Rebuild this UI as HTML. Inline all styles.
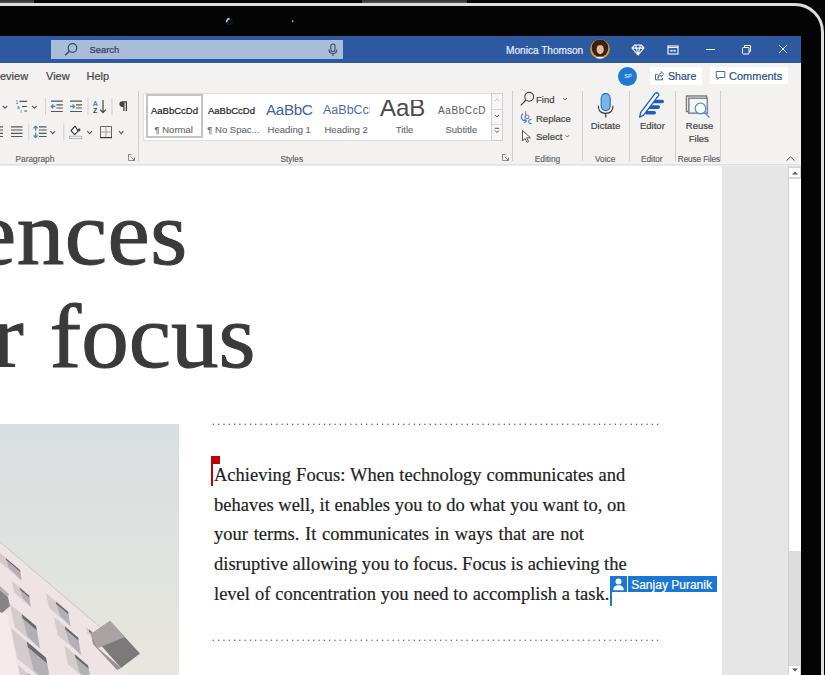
<!DOCTYPE html>
<html><head><meta charset="utf-8">
<style>
*{margin:0;padding:0;box-sizing:border-box}
html,body{width:825px;height:675px;overflow:hidden;background:#040404;font-family:"Liberation Sans",sans-serif}
.a{position:absolute}
.t{position:absolute;white-space:nowrap;line-height:1;-webkit-text-stroke:0.2px currentColor}
#frame{position:absolute;left:-40px;top:3px;width:864.3px;height:760px;border:3px solid #dedede;border-radius:29px}
#title{left:0;top:36px;width:801px;height:27px;background:#2c59a0}
#search{left:51px;top:40px;width:292px;height:19px;background:#a9bcd8}
#ribbon{left:0;top:63px;width:801px;height:101px;background:#f3f2f1}
#doc{left:0;top:164px;width:801px;height:511px;background:#e6e6e6}
#page{left:0;top:164px;width:722px;height:511px;background:#fff}
.sep{position:absolute;width:1px;background:#c8c6c4}
.gl{position:absolute;-webkit-text-stroke:0.15px currentColor;margin-top:1px;font-size:8.3px;color:#616161;white-space:nowrap;line-height:1}
.rb{position:absolute;-webkit-text-stroke:0.2px currentColor;font-size:9.5px;color:#444;white-space:nowrap;line-height:1}
</style></head><body>
<!-- top bezel bits -->
<div class="a" style="left:0;top:0;width:34px;height:3px;background:linear-gradient(#333,#555)"></div>
<div class="a" style="left:362px;top:0;width:105px;height:3px;background:linear-gradient(#333,#555)"></div>
<div id="frame"></div>
<svg class="a" style="left:222px;top:15px" width="80" height="14" viewBox="222 15 80 14"><circle cx="229.3" cy="21.6" r="3.6" fill="#0d1420"/><path d="M226.6 22.3 Q226.6 19 229.6 18.5" fill="none" stroke="#c5d0e0" stroke-width="1.3"/><circle cx="293" cy="21.5" r="1.6" fill="#1a2230"/><circle cx="292.6" cy="21.1" r="0.8" fill="#b9c2d0"/></svg>

<!-- title bar -->
<div id="title" class="a"></div>
<div id="search" class="a"></div>
<svg class="a" style="left:63px;top:42px" width="16" height="16" viewBox="0 0 16 16"><circle cx="9.5" cy="6" r="4.3" fill="none" stroke="#33466a" stroke-width="1.2"/><path d="M6.5 9 L2.2 13.3" stroke="#33466a" stroke-width="1.3"/></svg>
<div class="t" style="left:89.6px;top:45.9px;font-size:9.3px;color:#2b3a58">Search</div>
<svg class="a" style="left:327px;top:43px" width="12" height="14" viewBox="0 0 12 14"><rect x="3.8" y="1" width="4.2" height="7.5" rx="2.1" fill="none" stroke="#3a4b6a" stroke-width="1.1"/><path d="M2 6.5 Q2 10.5 5.9 10.5 Q9.8 10.5 9.8 6.5 M5.9 10.5 V13" fill="none" stroke="#3a4b6a" stroke-width="1.1"/></svg>

<div class="t" style="left:506px;top:45.5px;font-size:10.1px;color:#e8eefa">Monica Thomson</div>
<svg class="a" style="left:589.5px;top:39.3px" width="20" height="20" viewBox="0 0 20 20"><defs><clipPath id="av"><circle cx="10" cy="10" r="9.8"/></clipPath></defs><g clip-path="url(#av)"><rect width="20" height="20" fill="#c9a048"/><ellipse cx="10" cy="9" rx="8.3" ry="8.8" fill="#3b2112"/><ellipse cx="10.2" cy="10.6" rx="3.6" ry="4.6" fill="#e7b99a"/><path d="M4 20 Q10 15.5 16 20 Z" fill="#f2f2f2"/></g></svg>

<svg class="a" style="left:630.5px;top:43.5px" width="14" height="12" viewBox="0 0 14 12"><path d="M1 4 L3.8 1 H10.2 L13 4 L7 11.2 Z M1.2 4.1 H12.8 M5.2 1.2 Q4.6 3 5.3 4.1 L7 11 L8.7 4.1 Q9.4 3 8.8 1.2" fill="none" stroke="#fff" stroke-width="1.1" stroke-linejoin="round"/></svg>
<svg class="a" style="left:667px;top:44.5px" width="12" height="10" viewBox="0 0 12 10"><rect x="1" y="1" width="10" height="8" fill="none" stroke="#fff" stroke-width="1.1"/><path d="M1 2.6 H11" stroke="#fff" stroke-width="1"/><path d="M2.8 5.8 L4.6 4.4 V7.2 Z M9.2 5.8 L7.4 4.4 V7.2 Z" fill="#fff"/><path d="M4.5 5.8 H7.5" stroke="#fff" stroke-width="0.9"/></svg>
<div class="a" style="left:706px;top:49px;width:9px;height:1px;background:#fff"></div>
<svg class="a" style="left:741px;top:44px" width="11" height="11" viewBox="0 0 11 11"><rect x="1.5" y="3.5" width="6.5" height="6.5" rx="0.8" fill="none" stroke="#fff" stroke-width="1"/><path d="M3.5 3.5 V1.5 H9.5 V7.5 H8" fill="none" stroke="#fff" stroke-width="1"/></svg>
<svg class="a" style="left:778px;top:44px" width="10" height="10" viewBox="0 0 10 10"><path d="M1 1 L9 9 M9 1 L1 9" stroke="#fff" stroke-width="0.9"/></svg>

<!-- ribbon -->
<div id="ribbon" class="a"></div>
<div class="t" style="left:0;top:71px;font-size:11px;color:#444">eview</div>
<div class="t" style="left:46px;top:71px;font-size:11px;color:#444">View</div>
<div class="t" style="left:86.5px;top:71px;font-size:11px;color:#444">Help</div>


<!-- share / comments -->
<div class="a" style="left:618px;top:66.8px;width:19px;height:19px;border-radius:50%;background:#1f78d1"></div>
<div class="t" style="left:624.3px;top:74px;font-size:5.6px;color:#f4f8ff;-webkit-text-stroke:0">SP</div>
<div class="a" style="left:650px;top:67px;width:52px;height:17.5px;background:#fff;border-radius:1px"></div>
<svg class="a" style="left:654px;top:70px" width="11" height="11" viewBox="0 0 11 11"><path d="M3.5 4.5 H1.5 V9.8 H8.5 V8" fill="none" stroke="#3b5588" stroke-width="0.9"/><path d="M4 8.5 Q4.2 5.5 7.3 5.3 V6.8 L9.8 4.2 L7.3 1.6 V3.2 Q3.8 3.6 4 8.5Z" fill="none" stroke="#3b5588" stroke-width="0.85" stroke-linejoin="round"/></svg>
<div class="t" style="left:668px;top:70.8px;font-size:10.6px;color:#2b4c86">Share</div>
<div class="a" style="left:710px;top:66.5px;width:78px;height:17.5px;background:#fff;border-radius:1px"></div>
<svg class="a" style="left:715px;top:70px" width="11" height="11" viewBox="0 0 11 11"><path d="M1.3 1.5 H9.8 V7.5 H4.2 L2.3 9.3 V7.5 H1.3 Z" fill="none" stroke="#3b5588" stroke-width="0.9" stroke-linejoin="round"/></svg>
<div class="t" style="left:729px;top:70.5px;font-size:11px;color:#2b4c86">Comments</div>

<!-- Paragraph group -->
<svg class="a" style="left:0;top:90px" width="140" height="52" viewBox="0 90 140 52">
 <g fill="none" stroke="#555" stroke-width="1.1">
  <path d="M2.7 105.8 L5 108.2 L7.3 105.8"/>
  <path d="M32 105.8 L34.4 108.2 L36.8 105.8"/>
  <path d="M50.5 131.2 L52.8 133.6 L55.1 131.2"/>
  <path d="M87.3 131.2 L89.6 133.6 L92 131.2"/>
  <path d="M119 131.2 L121.2 133.6 L123.4 131.2"/>
 </g>
 <!-- multilevel list -->
 <g stroke="#555" stroke-width="1.2"><path d="M19.5 101.3 H27.2 M22 106.5 H27.2 M24.3 111 H27.2"/></g>
 <g fill="#2e6ea8" font-family="Liberation Sans" font-size="5"><text x="15.5" y="103.5">1</text><text x="17" y="108.5">a</text><text x="20.5" y="113">i</text></g>
 <!-- separators -->
 <g fill="#d2d0ce"><rect x="45" y="98" width="1" height="17"/><rect x="87.5" y="98" width="1" height="17"/><rect x="111.5" y="98" width="1" height="17"/>
 <rect x="28.3" y="123.5" width="1" height="17"/><rect x="63.3" y="123.5" width="1" height="17"/></g>
 <!-- decrease indent -->
 <g stroke="#555" stroke-width="1.2"><path d="M51 101.2 H62.8 M56.5 104.8 H62.8 M56.5 108 H62.8 M51 111.5 H62.8"/></g>
 <path d="M51.3 106.4 H55.5 M53.3 104.4 L51.3 106.4 L53.3 108.4" fill="none" stroke="#2f86d0" stroke-width="1.2"/>
 <!-- increase indent -->
 <g stroke="#555" stroke-width="1.2"><path d="M70 101.2 H82 M76 104.8 H82 M76 108 H82 M70 111.5 H82"/></g>
 <path d="M70.2 106.4 H74.5 M72.6 104.4 L74.6 106.4 L72.6 108.4" fill="none" stroke="#2f86d0" stroke-width="1.2"/>
 <!-- sort -->
 <text x="92.8" y="105.5" font-family="Liberation Sans" font-size="7" font-weight="bold" fill="#2f86d0">A</text>
 <text x="93" y="113.2" font-family="Liberation Sans" font-size="7" font-weight="bold" fill="#444">Z</text>
 <path d="M103 100 V112.5 M100.2 109.6 L103 112.6 L105.8 109.6" fill="none" stroke="#444" stroke-width="1.2"/>
 <!-- pilcrow -->
 <path d="M127 101.3 H122.2 A2.7 2.7 0 0 0 122.2 106.9 H123.2 V111.1 H124.5 V102.5 H125.7 V111.1 H127 Z" fill="#444"/>
 <!-- justify partial -->
 <g stroke="#555" stroke-width="1.2"><path d="M0 126.8 H3 M0 130 H3 M0 133.3 H3 M0 136.5 H3 M11 126.8 H22.5 M11 130 H22.5 M11 133.3 H22.5 M11 136.5 H22.5"/></g>
 <!-- line spacing -->
 <g stroke="#555" stroke-width="1.2"><path d="M39 126.8 H46.6 M39 130 H46.6 M39 133.3 H46.6 M39 136.5 H46.6"/></g>
 <path d="M35.6 126.2 V130.8 M33.5 128.3 L35.6 126.2 L37.7 128.3 M35.6 132.8 V137.4 M33.5 135.3 L35.6 137.4 L37.7 135.3" fill="none" stroke="#2f86d0" stroke-width="1.2"/>
 <!-- shading -->
 <path d="M74 127.3 L71 130.7 L74.6 134.6 L78.1 131.2 L75.2 126.2 L73.5 127.8" fill="#fff" stroke="#333" stroke-width="1.1" stroke-linejoin="round"/>
 <circle cx="79.1" cy="130" r="1.4" fill="#1e4f8a"/>
 <rect x="69.4" y="136.2" width="12.4" height="2.1" fill="#fafafa" stroke="#9a9a9a" stroke-width="0.7"/>
 <!-- borders -->
 <path d="M100.5 126.5 H111.5 V137.5 H100.5 Z" fill="none" stroke="#555" stroke-width="0.9"/><path d="M106 126.5 V137.5 M100.5 132 H111.5" fill="none" stroke="#999" stroke-width="0.9"/>
 <path d="M100 137.6 H112" stroke="#333" stroke-width="1.2"/>
</svg>
<div class="sep" style="left:138.3px;top:91px;height:70px;background:#d0cecc"></div>
<div class="gl" style="left:15.5px;top:154px;">Paragraph</div>


<svg class="a" style="left:127px;top:153px" width="10" height="9" viewBox="0 0 10 9"><path d="M1.5 4 V1.5 H4.5 M1.5 1.5 V7.5 H7.5 V4.5 M3.5 3.5 L7.2 7.2 M7.4 5 V7.4 H5" fill="none" stroke="#777" stroke-width="0.8"/></svg>
<svg class="a" style="left:501px;top:153px" width="10" height="9" viewBox="0 0 10 9"><path d="M1.5 4 V1.5 H4.5 M1.5 1.5 V7.5 H7.5 V4.5 M3.5 3.5 L7.2 7.2 M7.4 5 V7.4 H5" fill="none" stroke="#777" stroke-width="0.8"/></svg>

<!-- Styles gallery -->
<div class="a" style="left:143px;top:92.8px;width:360px;height:48.2px;background:#fff;border:1px solid #e1dfdd"></div>
<div class="a" style="left:146px;top:94.2px;width:57.3px;height:44.3px;border:2px solid #c4c4c4"></div>
<div class="t" style="left:151px;top:106px;font-size:9.5px;color:#222;">AaBbCcDd</div>
<div class="t" style="left:154.5px;top:124.5px;font-size:9.5px;color:#666;-webkit-text-stroke:0.1px currentColor">¶ Normal</div>
<div class="t" style="left:208px;top:106px;font-size:9.5px;color:#222;">AaBbCcDd</div>
<div class="t" style="left:207.3px;top:124.5px;font-size:9.5px;color:#666;-webkit-text-stroke:0.1px currentColor">¶ No Spac...</div>
<div class="a" style="left:266px;top:100px;width:47px;height:20px;overflow:hidden"><div class="t" style="left:0;top:2px;font-size:15.2px;color:#3d62a8;letter-spacing:-0.35px;-webkit-text-stroke:0">AaBbCc</div></div>
<div class="t" style="left:267.6px;top:124.5px;font-size:9.5px;color:#666;-webkit-text-stroke:0.1px currentColor">Heading 1</div>
<div class="a" style="left:323px;top:100px;width:47px;height:20px;overflow:hidden"><div class="t" style="left:0;top:4px;font-size:12.5px;color:#4a6db0;-webkit-text-stroke:0">AaBbCcD</div></div>
<div class="t" style="left:324.5px;top:124.5px;font-size:9.5px;color:#666;-webkit-text-stroke:0.1px currentColor">Heading 2</div>
<div class="a" style="left:378px;top:99.6px;width:50px;height:20px;overflow:hidden"><div class="t" style="left:2px;top:-3.9px;font-size:24px;color:#4a4a4a;-webkit-text-stroke:0">AaB</div></div>
<div class="t" style="left:395.8px;top:124.5px;font-size:9.5px;color:#666;-webkit-text-stroke:0.1px currentColor">Title</div>
<div class="t" style="left:438px;top:106px;font-size:10px;color:#5a5a5a;letter-spacing:0.6px;-webkit-text-stroke:0">AaBbCcD</div>
<div class="t" style="left:445.5px;top:124.5px;font-size:9.5px;color:#666;-webkit-text-stroke:0.1px currentColor">Subtitle</div>
<div class="a" style="left:491px;top:92.8px;width:11.5px;height:48.2px;background:#f7f7f7;border:1px solid #cfcfcf"></div>
<div class="a" style="left:491px;top:108.8px;width:11.5px;height:1px;background:#d6d6d6"></div>
<div class="a" style="left:491px;top:124.2px;width:11.5px;height:1px;background:#d6d6d6"></div>
<svg class="a" style="left:491px;top:92px" width="12" height="48" viewBox="0 0 12 48"><path d="M4 9 L6 7 L8 9" fill="none" stroke="#bbb" stroke-width="0.9"/><path d="M4 23 L6 25 L8 23" fill="none" stroke="#444" stroke-width="0.9"/><path d="M3.8 36.3 H8.2 M4 38.5 L6 40.5 L8 38.5" fill="none" stroke="#444" stroke-width="0.9"/></svg>
<div class="gl" style="left:280.5px;top:154px;">Styles</div>
<div class="sep" style="left:511.5px;top:91px;height:70px;background:#d0cecc"></div>

<!-- Editing -->
<svg class="a" style="left:518px;top:90px" width="60" height="55" viewBox="518 90 60 55">
 <circle cx="529.2" cy="96.8" r="4.4" fill="none" stroke="#444" stroke-width="1.1"/>
 <path d="M526 100 L520.8 105.3" stroke="#444" stroke-width="1.2"/>
 <path d="M563 98 L565 100 L567 98" fill="none" stroke="#555" stroke-width="0.9"/>
 <path d="M525.6 111.3 V117.6 M525.6 115.6 A1.9 1.9 0 1 0 525.7 115.5" fill="none" stroke="#a56cc0" stroke-width="1.1"/>
 <path d="M531.6 119.8 A2 2 0 1 0 531.6 123.3" fill="none" stroke="#3a8ad0" stroke-width="1.1"/>
 <path d="M522.8 113.6 Q520.2 116.8 522.3 119.6 Q523.5 120.9 526.3 120.9 M524.3 118.9 L526.4 120.9 L524.3 122.9" fill="none" stroke="#2f86d0" stroke-width="1.2"/>
 <path d="M522.5 130.5 V141 L525 138.5 L527 142.3 L528.6 141.5 L526.7 137.8 H530.5 Z" fill="#fff" stroke="#444" stroke-width="0.9" stroke-linejoin="round"/>
 <path d="M565.5 135.2 L567.3 137 L569.1 135.2" fill="none" stroke="#555" stroke-width="0.9"/>
</svg>
<div class="rb" style="left:536px;top:95px;">Find</div>
<div class="rb" style="left:536px;top:114px;">Replace</div>
<div class="rb" style="left:536px;top:132px;">Select</div>
<div class="gl" style="left:534.8px;top:154px;">Editing</div>
<div class="sep" style="left:582.3px;top:91px;height:70px;background:#d0cecc"></div>

<!-- Voice -->
<svg class="a" style="left:595px;top:92px" width="22" height="27" viewBox="0 0 22 27">
 <path d="M3.3 13.8 Q3.3 21.4 10.7 21.4 Q18 21.4 18 13.8 M10.7 21.4 V25.6" fill="none" stroke="#333" stroke-width="1.1"/>
 <rect x="6.2" y="1.6" width="9" height="17" rx="4.5" fill="#7cb5ea" stroke="#2a6db8" stroke-width="1.1"/>
</svg>
<div class="rb" style="left:590.7px;top:121px;">Dictate</div>
<div class="gl" style="left:595px;top:154px;">Voice</div>
<div class="sep" style="left:628.5px;top:91px;height:70px;background:#d0cecc"></div>

<!-- Editor -->
<svg class="a" style="left:638px;top:92px" width="28" height="28" viewBox="0 0 28 28">
 <path d="M14.5 7.7 H24.2 A1.8 1.8 0 0 1 24.2 11.3 H14.5 Z M11 13.3 H20.2 A1.8 1.8 0 0 1 20.2 16.9 H11 Z M7.5 18.9 H16.2 A1.8 1.8 0 0 1 16.2 22.5 H7.5 Z" fill="#1f5cbf"/>
 <path d="M2.6 20.6 L17.3 1.2 Q18.9 0.2 20.2 1.3 Q21.2 2.5 20.5 3.6 L5.6 23.2 L1.6 25.1 Z" fill="#f6f9ff" stroke="#1f5cbf" stroke-width="1.3" stroke-linejoin="round"/>
</svg>
<div class="rb" style="left:640px;top:121px;">Editor</div>
<div class="gl" style="left:640.9px;top:154px;">Editor</div>
<div class="sep" style="left:674.7px;top:91px;height:70px;background:#d0cecc"></div>

<!-- Reuse Files -->
<svg class="a" style="left:684px;top:94px" width="28" height="26" viewBox="0 0 28 26">
 <rect x="2.5" y="2" width="20" height="15.5" fill="#fff" stroke="#777" stroke-width="1.4"/>
 <rect x="4.8" y="4.2" width="18.5" height="15" fill="#f4f4f4" stroke="#8a8a8a" stroke-width="1.6"/>
 <circle cx="16.5" cy="14.5" r="5.3" fill="#fff" stroke="#4a92d6" stroke-width="1.2"/>
 <path d="M20.2 18.4 L25.5 23.5" stroke="#4a92d6" stroke-width="1.3"/>
</svg>
<div class="rb" style="left:685.8px;top:121px;">Reuse</div>
<div class="rb" style="left:688.8px;top:134px;">Files</div>
<div class="gl" style="left:677.8px;top:154px;letter-spacing:-0.15px">Reuse Files</div>
<div class="sep" style="left:720.4px;top:91px;height:70px;background:#d0cecc"></div>
<svg class="a" style="left:785px;top:155px" width="11" height="8" viewBox="0 0 11 8"><path d="M1.5 5.7 L5.5 1.8 L9.5 5.7" fill="none" stroke="#444" stroke-width="1"/></svg>

<!-- doc -->
<div id="doc" class="a"></div>
<div id="page" class="a"></div>


<!-- document content -->
<div class="a" style="left:0;top:164px;width:801px;height:2px;background:linear-gradient(#dcdcdc,#f0f0f0)"></div>
<div class="t" id="big1" style="left:-26.2px;top:189.3px;font-family:'Liberation Serif',serif;font-size:90px;color:#3a3a3a;letter-spacing:0.5px;-webkit-text-stroke:1px #3a3a3a;transform:scaleX(1.057);transform-origin:0 0">ences</div>
<div class="t" id="big2" style="left:-7.7px;top:292.3px;font-family:'Liberation Serif',serif;font-size:90px;color:#3a3a3a;word-spacing:2px;-webkit-text-stroke:1px #3a3a3a;transform:scaleX(1.057);transform-origin:0 0">r focus</div>

<!-- image -->
<svg class="a" style="left:0;top:424px" width="179" height="251" viewBox="0 424 179 251">
 <defs><linearGradient id="sky" x1="0" y1="0" x2="0" y2="1"><stop offset="0" stop-color="#d9dee0"/><stop offset="0.5" stop-color="#dfe2df"/><stop offset="1" stop-color="#e8e7dd"/></linearGradient></defs>
 <rect x="0" y="424" width="179" height="251" fill="url(#sky)"/>
 <path d="M0 542 L100 627 L92 634 L121 668 L126 675 L0 675 Z" fill="#efe4e5"/>
 <path d="M0 542 L100 627" stroke="#c9bcbe" stroke-width="0.8"/>
 <path d="M0 612 L7 614 L19 675 L0 675 Z" fill="#f4ecec"/>
 <polygon points="-6.0,548.0 20.0,570.1 22.2,581.1 -3.8,559.0" fill="#d4cbcd"/><polygon points="5.7,557.9 20.0,570.1 20.4,572.3 6.1,560.1" fill="#6e686a"/><polygon points="6.1,560.1 20.4,572.3 21.2,580.1 8.9,567.9" fill="#b3afb5"/><polygon points="12.0,581.0 29.0,595.5 31.4,607.5 14.4,593.0" fill="#d4cbcd"/><polygon points="19.6,587.5 29.0,595.5 29.5,597.9 20.1,589.9" fill="#6e686a"/><polygon points="20.1,589.9 29.5,597.9 30.4,606.5 23.0,598.5" fill="#b3afb5"/><polygon points="46.0,593.0 68.0,611.7 71.0,626.7 49.0,608.0" fill="#d4cbcd"/><polygon points="55.9,601.4 68.0,611.7 68.6,614.7 56.5,604.4" fill="#6e686a"/><polygon points="56.5,604.4 68.6,614.7 70.0,625.7 59.9,615.4" fill="#b3afb5"/><polygon points="10.0,604.0 36.0,626.1 40.6,649.1 14.6,627.0" fill="#d4cbcd"/><polygon points="21.7,613.9 36.0,626.1 36.9,630.7 22.6,618.5" fill="#6e686a"/><polygon points="22.6,618.5 36.9,630.7 39.6,648.1 27.3,635.9" fill="#b3afb5"/><polygon points="54.0,617.0 78.0,637.4 81.6,655.4 57.6,635.0" fill="#d4cbcd"/><polygon points="64.8,626.2 78.0,637.4 78.7,641.0 65.5,629.8" fill="#6e686a"/><polygon points="65.5,629.8 78.7,641.0 80.6,654.4 69.4,643.2" fill="#b3afb5"/><polygon points="11.0,628.0 46.0,657.8 52.0,687.8 17.0,658.0" fill="#d4cbcd"/><polygon points="26.8,641.4 46.0,657.8 47.2,663.8 27.9,647.4" fill="#6e686a"/><polygon points="27.9,647.4 47.2,663.8 51.0,686.8 33.8,670.4" fill="#b3afb5"/><polygon points="64.0,645.0 88.0,665.4 91.8,684.4 67.8,664.0" fill="#d4cbcd"/><polygon points="74.8,654.2 88.0,665.4 88.8,669.2 75.6,658.0" fill="#6e686a"/><polygon points="75.6,658.0 88.8,669.2 90.8,683.4 79.6,672.2" fill="#b3afb5"/><polygon points="18.0,665.0 40.0,683.7 43.2,699.7 21.2,681.0" fill="#d4cbcd"/><polygon points="27.9,673.4 40.0,683.7 40.6,686.9 28.5,676.6" fill="#6e686a"/><polygon points="28.5,676.6 40.6,686.9 42.2,698.7 32.1,688.4" fill="#b3afb5"/><polygon points="86.0,627.0 92.0,632.1 93.2,638.1 87.2,633.0" fill="#d4cbcd"/><polygon points="88.7,629.3 92.0,632.1 92.4,634.3 89.1,631.5" fill="#6e686a"/><polygon points="89.1,631.5 92.4,634.3 92.2,637.1 90.9,634.3" fill="#b3afb5"/>
 <path d="M0 590 L8 597 L10 606 L2 613 L0 612 Z" fill="#8a8385"/>
 <path d="M0 586 L9 594 L8 597 L0 590 Z" fill="#b9b0b2"/>
 <path d="M91 634 L110 621 L140 653.6 L121 668 Z" fill="#7d7879"/>
 <path d="M91 634 L110 621 L125 637 L98 648 Z" fill="#a9a3a3"/>
 <path d="M91 634 L98 648 L121 668 L117 670 L93 644 Z" fill="#969091"/>
</svg>
<!-- dotted lines -->
<svg class="a" style="left:0;top:0" width="825" height="675" viewBox="0 0 825 675"><g fill="#555"><circle cx="213.40" cy="424.3" r="0.75"/><circle cx="218.69" cy="424.3" r="0.75"/><circle cx="223.98" cy="424.3" r="0.75"/><circle cx="229.27" cy="424.3" r="0.75"/><circle cx="234.56" cy="424.3" r="0.75"/><circle cx="239.84" cy="424.3" r="0.75"/><circle cx="245.13" cy="424.3" r="0.75"/><circle cx="250.42" cy="424.3" r="0.75"/><circle cx="255.71" cy="424.3" r="0.75"/><circle cx="261.00" cy="424.3" r="0.75"/><circle cx="266.29" cy="424.3" r="0.75"/><circle cx="271.58" cy="424.3" r="0.75"/><circle cx="276.87" cy="424.3" r="0.75"/><circle cx="282.16" cy="424.3" r="0.75"/><circle cx="287.45" cy="424.3" r="0.75"/><circle cx="292.74" cy="424.3" r="0.75"/><circle cx="298.02" cy="424.3" r="0.75"/><circle cx="303.31" cy="424.3" r="0.75"/><circle cx="308.60" cy="424.3" r="0.75"/><circle cx="313.89" cy="424.3" r="0.75"/><circle cx="319.18" cy="424.3" r="0.75"/><circle cx="324.47" cy="424.3" r="0.75"/><circle cx="329.76" cy="424.3" r="0.75"/><circle cx="335.05" cy="424.3" r="0.75"/><circle cx="340.34" cy="424.3" r="0.75"/><circle cx="345.62" cy="424.3" r="0.75"/><circle cx="350.91" cy="424.3" r="0.75"/><circle cx="356.20" cy="424.3" r="0.75"/><circle cx="361.49" cy="424.3" r="0.75"/><circle cx="366.78" cy="424.3" r="0.75"/><circle cx="372.07" cy="424.3" r="0.75"/><circle cx="377.36" cy="424.3" r="0.75"/><circle cx="382.65" cy="424.3" r="0.75"/><circle cx="387.94" cy="424.3" r="0.75"/><circle cx="393.23" cy="424.3" r="0.75"/><circle cx="398.51" cy="424.3" r="0.75"/><circle cx="403.80" cy="424.3" r="0.75"/><circle cx="409.09" cy="424.3" r="0.75"/><circle cx="414.38" cy="424.3" r="0.75"/><circle cx="419.67" cy="424.3" r="0.75"/><circle cx="424.96" cy="424.3" r="0.75"/><circle cx="430.25" cy="424.3" r="0.75"/><circle cx="435.54" cy="424.3" r="0.75"/><circle cx="440.83" cy="424.3" r="0.75"/><circle cx="446.12" cy="424.3" r="0.75"/><circle cx="451.40" cy="424.3" r="0.75"/><circle cx="456.69" cy="424.3" r="0.75"/><circle cx="461.98" cy="424.3" r="0.75"/><circle cx="467.27" cy="424.3" r="0.75"/><circle cx="472.56" cy="424.3" r="0.75"/><circle cx="477.85" cy="424.3" r="0.75"/><circle cx="483.14" cy="424.3" r="0.75"/><circle cx="488.43" cy="424.3" r="0.75"/><circle cx="493.72" cy="424.3" r="0.75"/><circle cx="499.01" cy="424.3" r="0.75"/><circle cx="504.29" cy="424.3" r="0.75"/><circle cx="509.58" cy="424.3" r="0.75"/><circle cx="514.87" cy="424.3" r="0.75"/><circle cx="520.16" cy="424.3" r="0.75"/><circle cx="525.45" cy="424.3" r="0.75"/><circle cx="530.74" cy="424.3" r="0.75"/><circle cx="536.03" cy="424.3" r="0.75"/><circle cx="541.32" cy="424.3" r="0.75"/><circle cx="546.61" cy="424.3" r="0.75"/><circle cx="551.90" cy="424.3" r="0.75"/><circle cx="557.18" cy="424.3" r="0.75"/><circle cx="562.47" cy="424.3" r="0.75"/><circle cx="567.76" cy="424.3" r="0.75"/><circle cx="573.05" cy="424.3" r="0.75"/><circle cx="578.34" cy="424.3" r="0.75"/><circle cx="583.63" cy="424.3" r="0.75"/><circle cx="588.92" cy="424.3" r="0.75"/><circle cx="594.21" cy="424.3" r="0.75"/><circle cx="599.50" cy="424.3" r="0.75"/><circle cx="604.79" cy="424.3" r="0.75"/><circle cx="610.07" cy="424.3" r="0.75"/><circle cx="615.36" cy="424.3" r="0.75"/><circle cx="620.65" cy="424.3" r="0.75"/><circle cx="625.94" cy="424.3" r="0.75"/><circle cx="631.23" cy="424.3" r="0.75"/><circle cx="636.52" cy="424.3" r="0.75"/><circle cx="641.81" cy="424.3" r="0.75"/><circle cx="647.10" cy="424.3" r="0.75"/><circle cx="652.39" cy="424.3" r="0.75"/><circle cx="657.68" cy="424.3" r="0.75"/></g><g fill="#6a6a6a"><circle cx="213.30" cy="640.3" r="0.8"/><circle cx="218.59" cy="640.3" r="0.8"/><circle cx="223.88" cy="640.3" r="0.8"/><circle cx="229.17" cy="640.3" r="0.8"/><circle cx="234.46" cy="640.3" r="0.8"/><circle cx="239.75" cy="640.3" r="0.8"/><circle cx="245.03" cy="640.3" r="0.8"/><circle cx="250.32" cy="640.3" r="0.8"/><circle cx="255.61" cy="640.3" r="0.8"/><circle cx="260.90" cy="640.3" r="0.8"/><circle cx="266.19" cy="640.3" r="0.8"/><circle cx="271.48" cy="640.3" r="0.8"/><circle cx="276.77" cy="640.3" r="0.8"/><circle cx="282.06" cy="640.3" r="0.8"/><circle cx="287.35" cy="640.3" r="0.8"/><circle cx="292.63" cy="640.3" r="0.8"/><circle cx="297.92" cy="640.3" r="0.8"/><circle cx="303.21" cy="640.3" r="0.8"/><circle cx="308.50" cy="640.3" r="0.8"/><circle cx="313.79" cy="640.3" r="0.8"/><circle cx="319.08" cy="640.3" r="0.8"/><circle cx="324.37" cy="640.3" r="0.8"/><circle cx="329.66" cy="640.3" r="0.8"/><circle cx="334.95" cy="640.3" r="0.8"/><circle cx="340.24" cy="640.3" r="0.8"/><circle cx="345.52" cy="640.3" r="0.8"/><circle cx="350.81" cy="640.3" r="0.8"/><circle cx="356.10" cy="640.3" r="0.8"/><circle cx="361.39" cy="640.3" r="0.8"/><circle cx="366.68" cy="640.3" r="0.8"/><circle cx="371.97" cy="640.3" r="0.8"/><circle cx="377.26" cy="640.3" r="0.8"/><circle cx="382.55" cy="640.3" r="0.8"/><circle cx="387.84" cy="640.3" r="0.8"/><circle cx="393.13" cy="640.3" r="0.8"/><circle cx="398.41" cy="640.3" r="0.8"/><circle cx="403.70" cy="640.3" r="0.8"/><circle cx="408.99" cy="640.3" r="0.8"/><circle cx="414.28" cy="640.3" r="0.8"/><circle cx="419.57" cy="640.3" r="0.8"/><circle cx="424.86" cy="640.3" r="0.8"/><circle cx="430.15" cy="640.3" r="0.8"/><circle cx="435.44" cy="640.3" r="0.8"/><circle cx="440.73" cy="640.3" r="0.8"/><circle cx="446.02" cy="640.3" r="0.8"/><circle cx="451.31" cy="640.3" r="0.8"/><circle cx="456.59" cy="640.3" r="0.8"/><circle cx="461.88" cy="640.3" r="0.8"/><circle cx="467.17" cy="640.3" r="0.8"/><circle cx="472.46" cy="640.3" r="0.8"/><circle cx="477.75" cy="640.3" r="0.8"/><circle cx="483.04" cy="640.3" r="0.8"/><circle cx="488.33" cy="640.3" r="0.8"/><circle cx="493.62" cy="640.3" r="0.8"/><circle cx="498.91" cy="640.3" r="0.8"/><circle cx="504.19" cy="640.3" r="0.8"/><circle cx="509.48" cy="640.3" r="0.8"/><circle cx="514.77" cy="640.3" r="0.8"/><circle cx="520.06" cy="640.3" r="0.8"/><circle cx="525.35" cy="640.3" r="0.8"/><circle cx="530.64" cy="640.3" r="0.8"/><circle cx="535.93" cy="640.3" r="0.8"/><circle cx="541.22" cy="640.3" r="0.8"/><circle cx="546.51" cy="640.3" r="0.8"/><circle cx="551.80" cy="640.3" r="0.8"/><circle cx="557.09" cy="640.3" r="0.8"/><circle cx="562.37" cy="640.3" r="0.8"/><circle cx="567.66" cy="640.3" r="0.8"/><circle cx="572.95" cy="640.3" r="0.8"/><circle cx="578.24" cy="640.3" r="0.8"/><circle cx="583.53" cy="640.3" r="0.8"/><circle cx="588.82" cy="640.3" r="0.8"/><circle cx="594.11" cy="640.3" r="0.8"/><circle cx="599.40" cy="640.3" r="0.8"/><circle cx="604.69" cy="640.3" r="0.8"/><circle cx="609.97" cy="640.3" r="0.8"/><circle cx="615.26" cy="640.3" r="0.8"/><circle cx="620.55" cy="640.3" r="0.8"/><circle cx="625.84" cy="640.3" r="0.8"/><circle cx="631.13" cy="640.3" r="0.8"/><circle cx="636.42" cy="640.3" r="0.8"/><circle cx="641.71" cy="640.3" r="0.8"/><circle cx="647.00" cy="640.3" r="0.8"/><circle cx="652.29" cy="640.3" r="0.8"/><circle cx="657.58" cy="640.3" r="0.8"/></g></svg>


<!-- paragraph -->
<div class="t" style="left:214px;top:465.9px;font-family:'Liberation Serif',serif;font-size:18.5px;color:#1e1e1e;word-spacing:0.4px">Achieving Focus: When technology communicates and</div>
<div class="t" style="left:214px;top:495.7px;font-family:'Liberation Serif',serif;font-size:18.5px;color:#1e1e1e;word-spacing:0.09px">behaves well, it enables you to do what you want to, on</div>
<div class="t" style="left:214px;top:525.3px;font-family:'Liberation Serif',serif;font-size:18.5px;color:#1e1e1e;word-spacing:1.09px">your terms. It communicates in ways that are not</div>
<div class="t" style="left:214px;top:554.8px;font-family:'Liberation Serif',serif;font-size:18.5px;color:#1e1e1e;word-spacing:-0.12px">disruptive allowing you to focus. Focus is achieving the</div>
<div class="t" style="left:214px;top:584.5px;font-family:'Liberation Serif',serif;font-size:18.5px;color:#1e1e1e;word-spacing:0.3px">level of concentration you need to accomplish a task.</div>

<!-- red cursor -->
<div class="a" style="left:211px;top:456.3px;width:2.2px;height:29.3px;background:#c00000"></div>
<div class="a" style="left:211px;top:456.3px;width:8.7px;height:7.4px;background:#c00000"></div>

<!-- blue cursor & label -->
<div class="a" style="left:609.5px;top:576px;width:2.3px;height:29.5px;background:#1b77d4"></div>
<div class="a" style="left:610px;top:576px;width:16.5px;height:16.4px;background:#1b77d4"></div>
<svg class="a" style="left:612px;top:577px" width="13" height="14" viewBox="0 0 13 14"><circle cx="6.5" cy="4.6" r="3" fill="#fff"/><path d="M1.2 13.2 Q1.2 8.3 6.5 8.3 Q11.8 8.3 11.8 13.2 Z" fill="#fff"/></svg>
<div class="a" style="left:627.5px;top:576px;width:89px;height:16.4px;background:#1b77d4"></div>
<div class="t" style="left:631.2px;top:578.5px;font-size:12px;color:#fff">Sanjay Puranik</div>

<!-- scrollbar -->
<div class="a" style="left:788px;top:166px;width:13px;height:509px;background:#dcdcdc;border-left:1px solid #d0d0d0"></div>
<div class="a" style="left:788px;top:166.7px;width:13px;height:11.5px;background:#fff;border:1px solid #d4d4d4"></div>
<svg class="a" style="left:789px;top:167px" width="12" height="11" viewBox="0 0 12 11"><path d="M3 7.5 L6 4.5 L9 7.5 Z" fill="#555"/></svg>
<div class="a" style="left:788px;top:179px;width:13px;height:371.5px;background:#fff;border-left:1px solid #d0d0d0"></div>
<div class="a" style="left:788px;top:664.7px;width:13px;height:11px;background:#fff;border:1px solid #d4d4d4"></div>
<svg class="a" style="left:789px;top:665px" width="12" height="10" viewBox="0 0 12 10"><path d="M3 3.5 L6 6.5 L9 3.5 Z" fill="#555"/></svg>

</body></html>
